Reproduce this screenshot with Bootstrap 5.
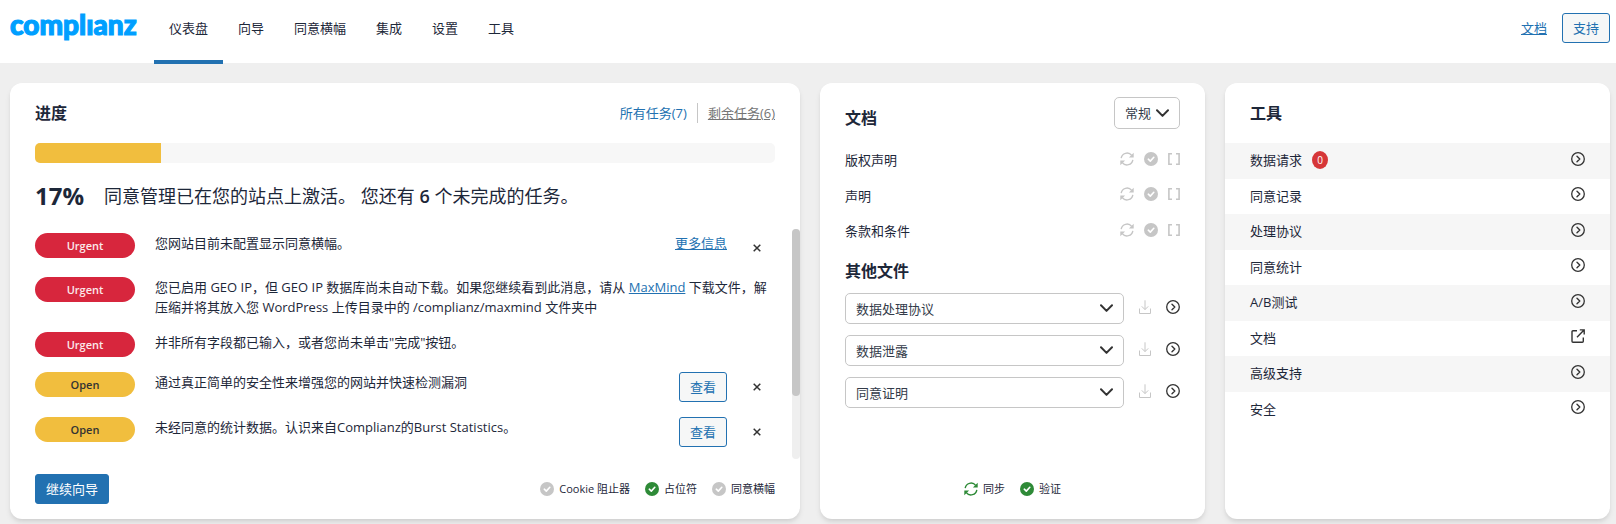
<!DOCTYPE html>
<html lang="zh-CN">
<head>
<meta charset="utf-8">
<meta name="viewport" content="width=device-width, initial-scale=1">
<title>Complianz 仪表盘</title>
<link href="https://cdn.jsdelivr.net/npm/bootstrap@5.3.0/dist/css/bootstrap.min.css" rel="stylesheet">
<style>
:root{--ink:#1d2739;--blue:#2271b1;--gray:#c6c6c6;--soft:#f6f6f6;--red:#d7263d;--yellow:#f1be3e;--green:#2e8a37}
body{background:#efefef;color:var(--ink);font:13px/20px "Open Sans","Noto Sans CJK SC",sans-serif}
a{color:var(--blue)}
svg{display:block;flex:none}
.topbar{height:63px;padding:0 6px 0 10px}
.brand{width:129px;margin-right:15px}
.tabs .nav-link{color:var(--ink);padding:18px 15px 22px;border-bottom:4px solid transparent;margin-bottom:-1px}
.tabs .nav-link.active{border-color:var(--blue)}
.btn-line,.btn-main{--bs-btn-font-size:13px;--bs-btn-line-height:20px;--bs-btn-padding-y:4px;--bs-btn-padding-x:10px;--bs-btn-border-radius:3px;--bs-btn-color:var(--blue);--bs-btn-bg:#f6f7f7;--bs-btn-border-color:var(--blue)}
.btn-main{--bs-btn-color:#fff;--bs-btn-bg:var(--blue)}
.gap-15{gap:15px}
.board{display:grid;grid-template-columns:repeat(4,minmax(0,1fr));gap:20px;padding:20px 6px 5px 10px}
.wide{grid-column:span 2}
.panel{background:#fff;border-radius:12px;box-shadow:0 4px 6px -1px rgba(0,0,0,.1),0 2px 4px -1px rgba(0,0,0,.06)}
.px-25{padding-left:25px;padding-right:25px}
.bar60{height:60px}
h2{font-size:16px;line-height:22px;font-weight:600;margin:0}
.tasks-left{color:#757575;border-left:1px solid var(--gray);padding-left:10px;margin-left:10px}
.meter{--bs-progress-height:20px;--bs-progress-bg:#f7f7f7;--bs-progress-bar-bg:var(--yellow);--bs-progress-border-radius:5px}
.summary{height:66px;font-size:18px;line-height:26px;gap:20px}
.summary strong{font-size:24px}
.summary b{font-weight:600}
.tasks{height:230px;position:relative;padding-top:4px}
.task-list{gap:15px;padding-right:33px}
.task{gap:20px}
.pill{width:100px;line-height:17px;padding:4px 0;border-radius:13px;font-size:11px;font-weight:600;text-align:center;flex:none}
.pill-urgent{background:var(--red);color:#fbe9eb}
.pill-open{background:var(--yellow);color:#333}
.dismiss{width:20px;height:29px;padding:0;border:0;background:none;color:#333;display:grid;place-items:center}
.track{position:absolute;top:0;right:0;width:8px;height:100%;background:#efefef;border-radius:4px}
.thumb{height:167px;background:var(--gray);border-radius:4px}
.legend{font-size:11px}
.legend svg{margin-right:5px}
.pick{border:1px solid var(--gray);border-radius:5px;color:#333b49;font-size:13px;line-height:20px;height:31px;padding:0 30px 0 10px;background-size:13px 9px;background-position:right 10px center;
 --bs-form-select-bg-img:url("data:image/svg+xml,%3Csvg xmlns='http://www.w3.org/2000/svg' viewBox='0 0 13 9'%3E%3Cpath d='M1 1.3l5.5 5.6L12 1.3' fill='none' stroke='%23333' stroke-width='2' stroke-linecap='round' stroke-linejoin='round'/%3E%3C/svg%3E")}
.pick-small{width:66px;height:32px;padding-right:24px}
.docs-head{height:60px;padding-top:14px}
.docs-head h2{padding-top:10px}
.line36{height:36px;padding-bottom:2px}
.line36:nth-child(even){height:35px}
.line36 svg,.pick-row svg{margin-bottom:3px}
.striped .line36:nth-child(odd){background:var(--soft)}
.states{gap:10px}
.is-off{color:var(--gray)}
.is-on{color:var(--green)}
.is-dark{color:#333}
.head44{line-height:43px}
.picks{gap:11px}
.count{background:#d63638;color:#fff;width:16px;height:18px;border-radius:50%;font-size:10px;line-height:19px;text-align:center;margin-left:10px}
</style>
</head>
<body>
<svg width="0" height="0" class="position-absolute" aria-hidden="true">
  <symbol id="sync" viewBox="0 0 14 14"><path d="M1.2 6.200A5.900 5.900 0 0 1 11.700 3.400M12.800 7.800A5.900 5.900 0 0 1 2.300 10.600" fill="none" stroke="currentColor" stroke-width="1.400"/><path d="M13.700.8v4.800H8.900zM.3 13.200V8.400h4.800z" fill="currentColor"/></symbol>
  <symbol id="check" viewBox="0 0 14 14"><circle cx="7" cy="7" r="7" fill="currentColor"/><path d="M4.3 7.2l2 1.9 3.5-3.8" fill="none" stroke="#fff" stroke-width="1.6" stroke-linecap="round" stroke-linejoin="round"/></symbol>
  <symbol id="brackets" viewBox="0 0 12 14"><path d="M4 1.7H.9v10.6H4M8 1.7h3.1v10.6H8" fill="none" stroke="currentColor" stroke-width="1.6"/></symbol>
  <symbol id="go" viewBox="0 0 14 14"><circle cx="7" cy="7" r="6.3" fill="none" stroke="currentColor" stroke-width="1.3"/><path d="M6 4.3L8.8 7 6 9.7" fill="none" stroke="currentColor" stroke-width="1.4" stroke-linecap="round" stroke-linejoin="round"/></symbol>
  <symbol id="load" viewBox="0 0 12 14"><path d="M.5 8.5v5h11v-5M6 .3v9.2M2.8 6.4L6 9.6l3.2-3.2" fill="none" stroke="currentColor"/></symbol>
  <symbol id="out" viewBox="0 0 14 14"><path d="M6 1.8H2a1 1 0 0 0-1 1v9.500a1 1 0 0 0 1 1h9.300a1 1 0 0 0 1-1V8.500M8.800.900h4.400v4.500M13 1L6 8.200" fill="none" stroke="currentColor" stroke-width="1.400"/></symbol>
  <symbol id="x" viewBox="0 0 8 8"><path d="M.7.7l6.600 6.600M7.300.7L.7 7.300" fill="none" stroke="currentColor" stroke-width="1.500"/></symbol>
</svg>

<header class="topbar bg-white d-flex align-items-start">
  <a class="brand" href="#" aria-label="complianz"><svg width="129" height="50" viewBox="0 0 129 50"><text x="0" y="35" font-family="Lato,sans-serif" font-weight="900" font-size="28" fill="#009fff" stroke="#009fff" stroke-width="1.2">complıanz</text></svg></a>
  <nav class="nav tabs">
    <a class="nav-link active" href="#" aria-current="page">仪表盘</a>
    <a class="nav-link" href="#">向导</a>
    <a class="nav-link" href="#">同意横幅</a>
    <a class="nav-link" href="#">集成</a>
    <a class="nav-link" href="#">设置</a>
    <a class="nav-link" href="#">工具</a>
  </nav>
  <div class="ms-auto d-flex align-items-center gap-15 h-100 pb-2">
    <a href="#">文档</a>
    <button class="btn btn-line" type="button">支持</button>
  </div>
</header>

<main class="board">
  <section class="panel wide d-flex flex-column">
    <div class="bar60 px-25 d-flex align-items-center">
      <h2 class="me-auto">进度</h2>
      <a class="text-decoration-none" href="#">所有任务(7)</a>
      <a class="tasks-left" href="#">剩余任务(6)</a>
    </div>
    <div class="px-25">
      <div class="progress meter" role="progressbar" aria-label="进度" aria-valuenow="17" aria-valuemin="0" aria-valuemax="100"><div class="progress-bar" style="width:17%"></div></div>
      <div class="summary d-flex align-items-center"><strong>17%</strong><span>同意管理已在您的站点上激活。 您还有 <b>6</b> 个未完成的任务。</span></div>
    </div>
    <div class="tasks">
      <div class="px-25 task-list d-flex flex-column">
        <div class="task d-flex align-items-start"><span class="pill pill-urgent">Urgent</span><span class="me-auto">您网站目前未配置显示同意横幅。</span><a href="#">更多信息</a><button class="dismiss" type="button" aria-label="关闭"><svg width="8" height="8"><use href="#x"/></svg></button></div>
        <div class="task d-flex align-items-start"><span class="pill pill-urgent">Urgent</span><span>您已启用 GEO IP，但 GEO IP 数据库尚未自动下载。如果您继续看到此消息，请从 <a href="#">MaxMind</a> 下载文件，解压缩并将其放入您 WordPress 上传目录中的 /complianz/maxmind 文件夹中</span></div>
        <div class="task d-flex align-items-start"><span class="pill pill-urgent">Urgent</span><span>并非所有字段都已输入，或者您尚未单击"完成"按钮。</span></div>
        <div class="task d-flex align-items-start"><span class="pill pill-open">Open</span><span class="me-auto">通过真正简单的安全性来增强您的网站并快速检测漏洞</span><button class="btn btn-line" type="button">查看</button><button class="dismiss" type="button" aria-label="关闭"><svg width="8" height="8"><use href="#x"/></svg></button></div>
        <div class="task d-flex align-items-start"><span class="pill pill-open">Open</span><span class="me-auto">未经同意的统计数据。认识来自Complianz的Burst Statistics。</span><button class="btn btn-line" type="button">查看</button><button class="dismiss" type="button" aria-label="关闭"><svg width="8" height="8"><use href="#x"/></svg></button></div>
      </div>
      <div class="track"><div class="thumb"></div></div>
    </div>
    <div class="bar60 px-25 d-flex align-items-center gap-15 legend mt-auto">
      <button class="btn btn-main me-auto" type="button">继续向导</button>
      <span class="d-flex align-items-center"><svg class="is-off" width="14" height="14"><use href="#check"/></svg>Cookie 阻止器</span>
      <span class="d-flex align-items-center"><svg class="is-on" width="14" height="14"><use href="#check"/></svg>占位符</span>
      <span class="d-flex align-items-center"><svg class="is-off" width="14" height="14"><use href="#check"/></svg>同意横幅</span>
    </div>
  </section>

  <section class="panel px-25 d-flex flex-column">
    <div class="docs-head d-flex align-items-start justify-content-between">
      <h2>文档</h2>
      <select class="form-select pick pick-small" aria-label="区域"><option>常规</option></select>
    </div>
    <div>
      <div class="line36 d-flex align-items-center"><span class="me-auto">版权声明</span><span class="states is-off d-flex"><svg width="14" height="14"><use href="#sync"/></svg><svg width="14" height="14"><use href="#check"/></svg><svg width="12" height="14"><use href="#brackets"/></svg></span></div>
      <div class="line36 d-flex align-items-center"><span class="me-auto">声明</span><span class="states is-off d-flex"><svg width="14" height="14"><use href="#sync"/></svg><svg width="14" height="14"><use href="#check"/></svg><svg width="12" height="14"><use href="#brackets"/></svg></span></div>
      <div class="line36 d-flex align-items-center"><span class="me-auto">条款和条件</span><span class="states is-off d-flex"><svg width="14" height="14"><use href="#sync"/></svg><svg width="14" height="14"><use href="#check"/></svg><svg width="12" height="14"><use href="#brackets"/></svg></span></div>
    </div>
    <h2 class="head44">其他文件</h2>
    <div class="picks d-flex flex-column">
      <div class="pick-row d-flex align-items-center gap-15"><select class="form-select pick" aria-label="数据处理协议"><option>数据处理协议</option></select><svg class="is-off" width="12" height="14"><use href="#load"/></svg><svg class="is-dark" width="14" height="14"><use href="#go"/></svg></div>
      <div class="pick-row d-flex align-items-center gap-15"><select class="form-select pick" aria-label="数据泄露"><option>数据泄露</option></select><svg class="is-off" width="12" height="14"><use href="#load"/></svg><svg class="is-dark" width="14" height="14"><use href="#go"/></svg></div>
      <div class="pick-row d-flex align-items-center gap-15"><select class="form-select pick" aria-label="同意证明"><option>同意证明</option></select><svg class="is-off" width="12" height="14"><use href="#load"/></svg><svg class="is-dark" width="14" height="14"><use href="#go"/></svg></div>
    </div>
    <div class="bar60 d-flex align-items-center justify-content-center gap-15 legend mt-auto">
      <span class="d-flex align-items-center"><svg class="is-on" width="14" height="14"><use href="#sync"/></svg>同步</span>
      <span class="d-flex align-items-center"><svg class="is-on" width="14" height="14"><use href="#check"/></svg>验证</span>
    </div>
  </section>

  <section class="panel">
    <div class="bar60 px-25 d-flex align-items-center"><h2>工具</h2></div>
    <div class="striped">
      <div class="line36 px-25 d-flex align-items-center"><span>数据请求</span><span class="count">0</span><svg class="ms-auto is-dark" width="14" height="14"><use href="#go"/></svg></div>
      <div class="line36 px-25 d-flex align-items-center"><span>同意记录</span><svg class="ms-auto is-dark" width="14" height="14"><use href="#go"/></svg></div>
      <div class="line36 px-25 d-flex align-items-center"><span>处理协议</span><svg class="ms-auto is-dark" width="14" height="14"><use href="#go"/></svg></div>
      <div class="line36 px-25 d-flex align-items-center"><span>同意统计</span><svg class="ms-auto is-dark" width="14" height="14"><use href="#go"/></svg></div>
      <div class="line36 px-25 d-flex align-items-center"><span>A/B测试</span><svg class="ms-auto is-dark" width="14" height="14"><use href="#go"/></svg></div>
      <div class="line36 px-25 d-flex align-items-center"><span>文档</span><svg class="ms-auto is-dark" width="14" height="14"><use href="#out"/></svg></div>
      <div class="line36 px-25 d-flex align-items-center"><span>高级支持</span><svg class="ms-auto is-dark" width="14" height="14"><use href="#go"/></svg></div>
      <div class="line36 px-25 d-flex align-items-center"><span>安全</span><svg class="ms-auto is-dark" width="14" height="14"><use href="#go"/></svg></div>
    </div>
  </section>
</main>
<script src="https://cdn.jsdelivr.net/npm/bootstrap@5.3.0/dist/js/bootstrap.bundle.min.js"></script>
</body>
</html>
